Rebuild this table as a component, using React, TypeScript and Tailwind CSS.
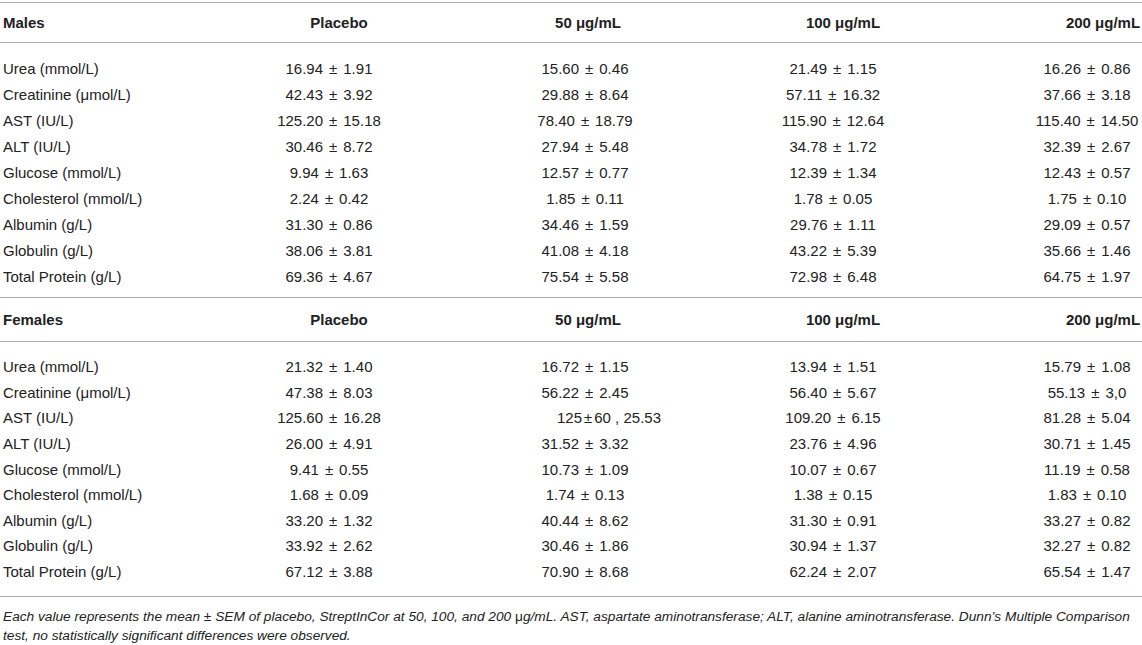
import React from "react";

type Row = [string, string, string, string, string];

const males: Row[] = [
  ["Urea (mmol/L)", "16.94 ± 1.91", "15.60 ± 0.46", "21.49 ± 1.15", "16.26 ± 0.86"],
  ["Creatinine (μmol/L)", "42.43 ± 3.92", "29.88 ± 8.64", "57.11 ± 16.32", "37.66 ± 3.18"],
  ["AST (IU/L)", "125.20 ± 15.18", "78.40 ± 18.79", "115.90 ± 12.64", "115.40 ± 14.50"],
  ["ALT (IU/L)", "30.46 ± 8.72", "27.94 ± 5.48", "34.78 ± 1.72", "32.39 ± 2.67"],
  ["Glucose (mmol/L)", "9.94 ± 1.63", "12.57 ± 0.77", "12.39 ± 1.34", "12.43 ± 0.57"],
  ["Cholesterol (mmol/L)", "2.24 ± 0.42", "1.85 ± 0.11", "1.78 ± 0.05", "1.75 ± 0.10"],
  ["Albumin (g/L)", "31.30 ± 0.86", "34.46 ± 1.59", "29.76 ± 1.11", "29.09 ± 0.57"],
  ["Globulin (g/L)", "38.06 ± 3.81", "41.08 ± 4.18", "43.22 ± 5.39", "35.66 ± 1.46"],
  ["Total Protein (g/L)", "69.36 ± 4.67", "75.54 ± 5.58", "72.98 ± 6.48", "64.75 ± 1.97"],
];

const females: Row[] = [
  ["Urea (mmol/L)", "21.32 ± 1.40", "16.72 ± 1.15", "13.94 ± 1.51", "15.79 ± 1.08"],
  ["Creatinine (μmol/L)", "47.38 ± 8.03", "56.22 ± 2.45", "56.40 ± 5.67", "55.13 ± 3,0"],
  ["AST (IU/L)", "125.60 ± 16.28", "125±60 , 25.53", "109.20 ± 6.15", "81.28 ± 5.04"],
  ["ALT (IU/L)", "26.00 ± 4.91", "31.52 ± 3.32", "23.76 ± 4.96", "30.71 ± 1.45"],
  ["Glucose (mmol/L)", "9.41 ± 0.55", "10.73 ± 1.09", "10.07 ± 0.67", "11.19 ± 0.58"],
  ["Cholesterol (mmol/L)", "1.68 ± 0.09", "1.74 ± 0.13", "1.38 ± 0.15", "1.83 ± 0.10"],
  ["Albumin (g/L)", "33.20 ± 1.32", "40.44 ± 8.62", "31.30 ± 0.91", "33.27 ± 0.82"],
  ["Globulin (g/L)", "33.92 ± 2.62", "30.46 ± 1.86", "30.94 ± 1.37", "32.27 ± 0.82"],
  ["Total Protein (g/L)", "67.12 ± 3.88", "70.90 ± 8.68", "62.24 ± 2.07", "65.54 ± 1.47"],
];

const headers = ["Placebo", "50 μg/mL", "100 μg/mL", "200 μg/mL"];

// value cells are centred; the last column sits past the middle of its track
const valueCls = ["text-center", "text-center", "text-center", "text-center pl-[78px]"];
const headCls = ["text-center pl-[20px]", "text-center pl-[6px]", "text-center pl-[20px]", "text-center pl-[110px]"];

// "a ± b" with the slightly wider gaps round the sign seen in the table
const Value = ({ v }: { v: string }) => {
  if (v.includes(" ± ")) {
    const [a, b] = v.split(" ± ");
    return (
      <>
        {a}
        <span className="mx-[6px]">±</span>
        {b}
      </>
    );
  }
  const [a, b] = v.split("±");
  return (
    <>
      {a}
      <span className="mx-[2px]">±</span>
      {b}
    </>
  );
};

const Section = ({
  title,
  rows,
  headH,
  rowH,
  bodyPad,
}: {
  title: string;
  rows: Row[];
  headH: string;
  rowH: string;
  bodyPad: string;
}) => (
  <div>
    <div className={`grid grid-cols-[200px_258px_254px_242px_1fr] items-center border-b border-[#ababab] font-bold ${headH}`}>
      <div className="pl-[3px]">{title}</div>
      {headers.map((h, i) => (
        <div key={h} className={headCls[i]}>
          {h}
        </div>
      ))}
    </div>
    <div className={bodyPad}>
      {rows.map((r) => (
        <div key={r[0]} className={`grid grid-cols-[200px_258px_254px_242px_1fr] items-center ${rowH}`}>
          <div className="pl-[3px] whitespace-nowrap">{r[0]}</div>
          {r.slice(1).map((v, i) => (
            <div
              key={i}
              className={`whitespace-nowrap ${valueCls[i]} ${v.startsWith("125±") ? "pl-[48px]" : ""}`}
            >
              <Value v={v} />
            </div>
          ))}
        </div>
      ))}
    </div>
  </div>
);

export default function App() {
  return (
    <div className="w-[1142px] h-[645px] overflow-hidden bg-white text-[#222222] text-[15px] leading-none font-['Liberation_Sans',Arial,sans-serif]">
      <div className="mt-[2px] border-t border-[#ababab]">
        <Section title="Males" rows={males} headH="h-[40px]" rowH="h-[26px]" bodyPad="pt-3 pb-[8px]" />
        <div className="border-t border-[#ababab]">
          <Section title="Females" rows={females} headH="h-[44px]" rowH="h-[25.6px]" bodyPad="pt-3 pb-[11.5px]" />
        </div>
        <div className="border-t border-[#ababab] pt-[10px] pl-[3px] italic text-[13.7px] leading-[19px]">
          Each value represents the mean ± SEM of placebo, StreptInCor at 50, 100, and 200 <span className="not-italic">μ</span>g/mL. AST, aspartate aminotransferase; ALT, alanine aminotransferase. Dunn’s Multiple Comparison
          <br />
          test, no statistically significant differences were observed.
        </div>
      </div>
    </div>
  );
}
